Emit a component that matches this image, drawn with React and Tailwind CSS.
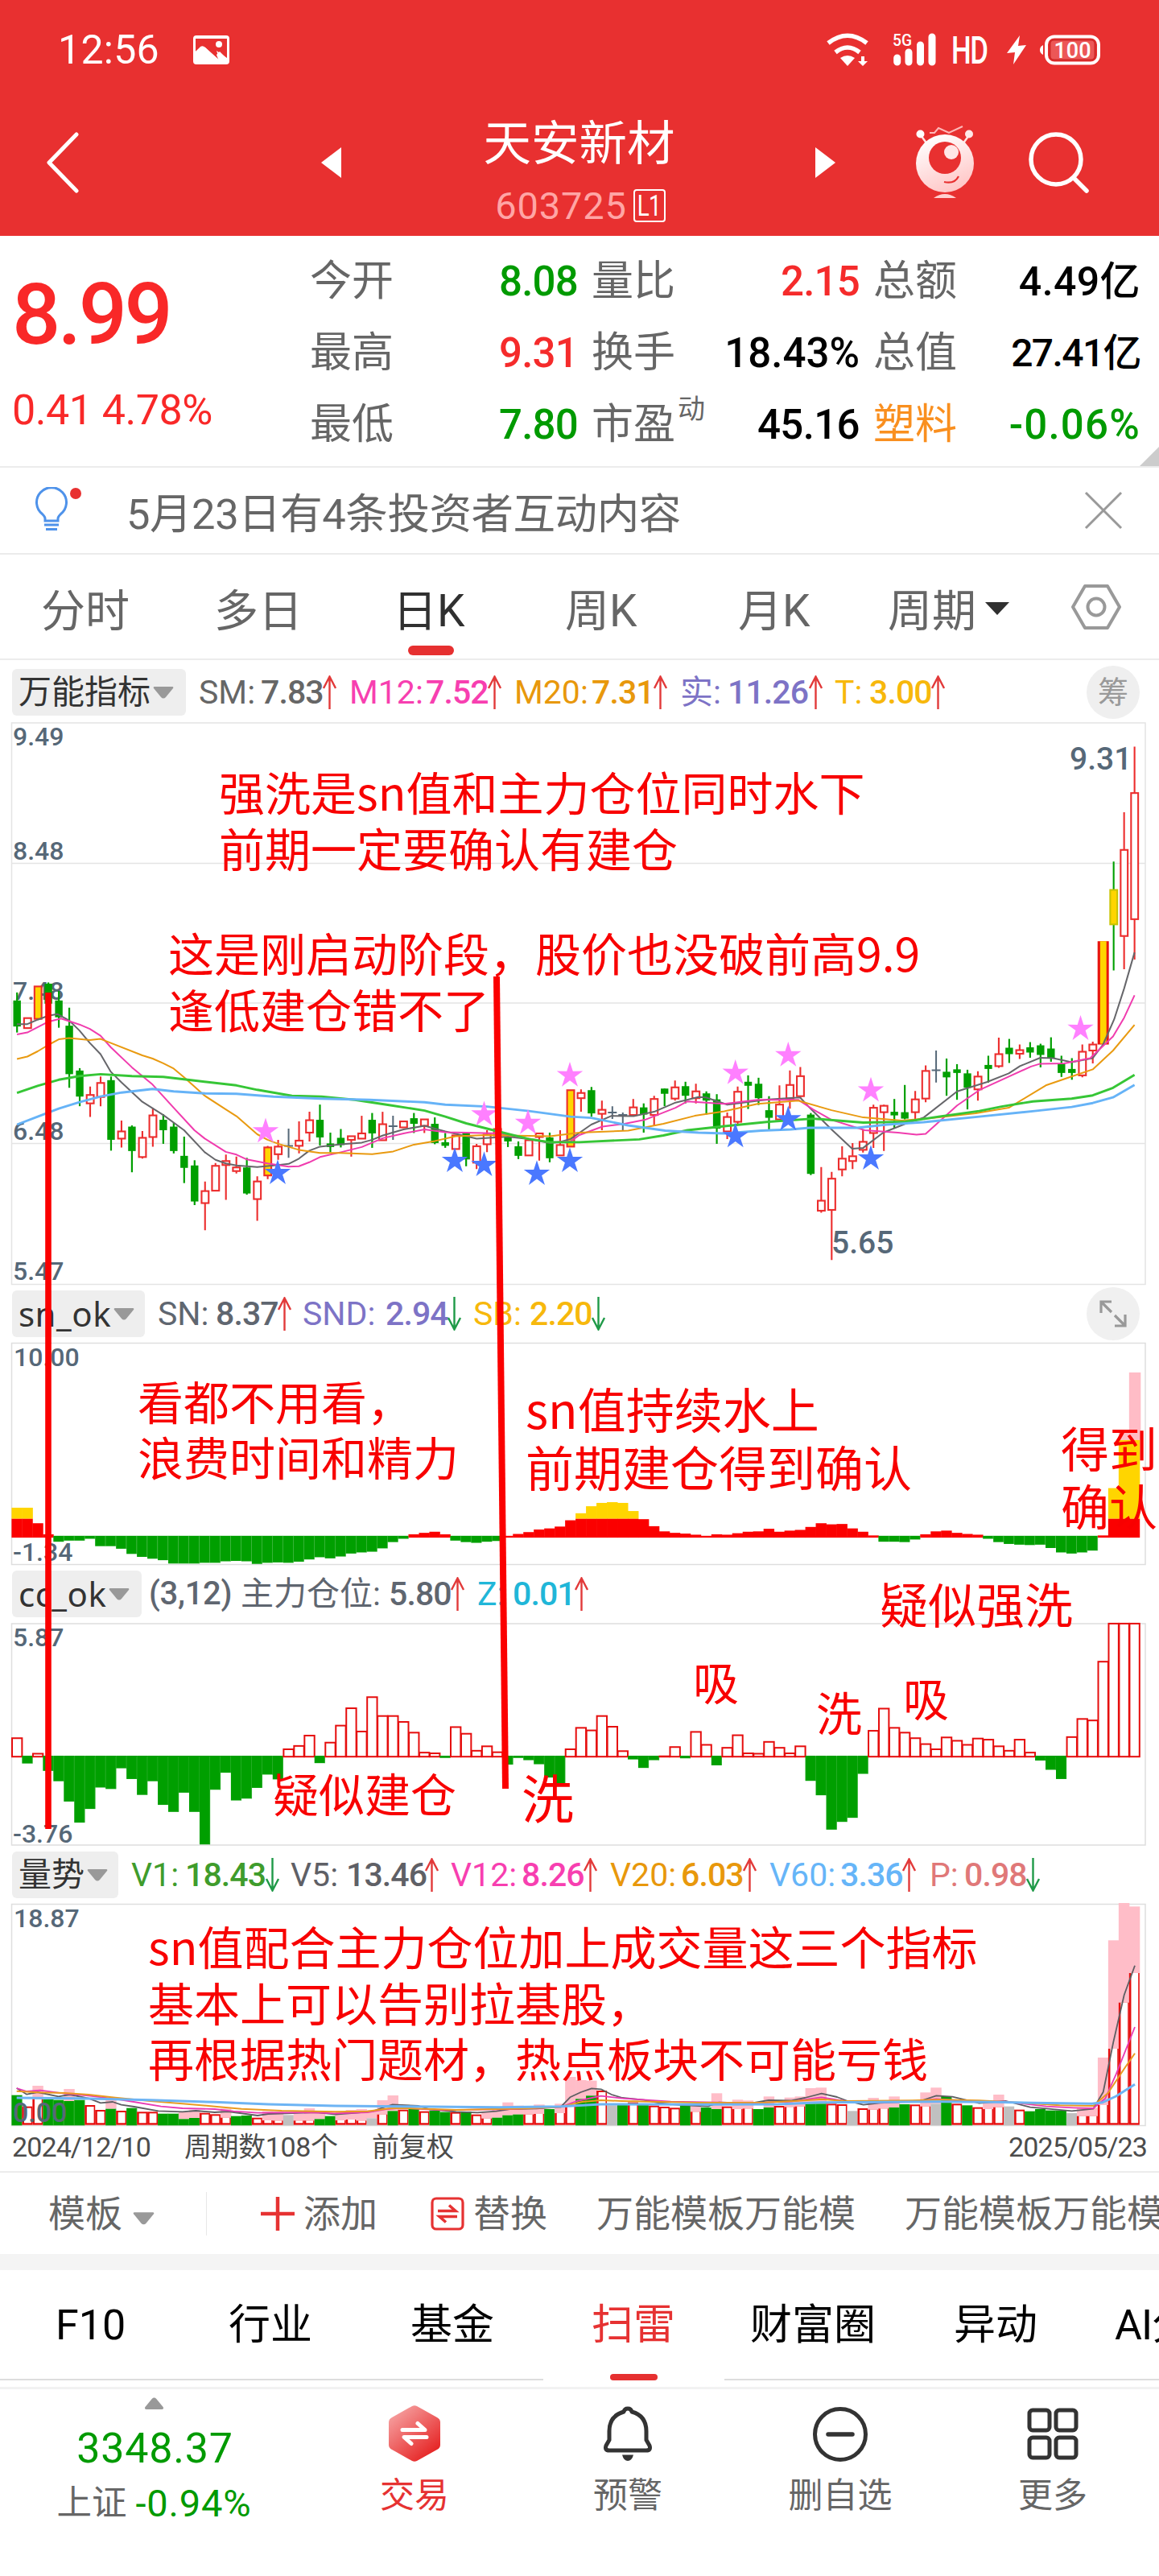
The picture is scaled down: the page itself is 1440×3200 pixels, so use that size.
import React from "react";

const CJK = "font-['Roboto','Noto_Sans_CJK_SC',sans-serif]";
const HAND = "font-['Noto_Sans_CJK_SC',sans-serif]";
const NUM_FAMILY = "Roboto, sans-serif";

const RED = "#e60d0d";
const GREEN = "#009f00";
const STEP = 12.976;
const LEFT = 14.4;
const centre = (i) => LEFT + STEP * (i + 0.5) + 0.3;

/* ---------- price panel ---------- */
// [kind, body top, body bottom, high, low] in panel ticks
const CANDLES = `g 850 915 830 930|r 893 920 893 920|y 814 897 814 897|g 808 858 805 858|g 850 892 826 918|g 913 1034 868 1068|g 1025 1090 1019 1114|r 1085 1108 1065 1141|r 1055 1092 1040 1114|g 1049 1198 1040 1225|r 1176 1196 1150 1217|g 1165 1226 1162 1279|r 1192 1242 1176 1245|r 1136 1192 1118 1215|g 1148 1174 1134 1208|g 1165 1226 1156 1232|g 1238 1268 1190 1306|g 1262 1352 1249 1361|r 1325 1357 1302 1424|r 1262 1326 1256 1326|r 1250 1262 1235 1348|r 1266 1277 1240 1282|g 1267 1332 1243 1335|r 1301 1347 1289 1400|y 1216 1288 1213 1296|r 1214 1235 1198 1248|d 1213 1213 1170 1243|r 1199 1214 1152 1232|r 1148 1181 1128 1202|g 1148 1192 1110 1212|g 1207 1216 1180 1229|g 1193 1211 1171 1217|r 1188 1199 1188 1240|r 1181 1196 1138 1196|g 1148 1182 1131 1218|r 1158 1200 1128 1200|d 1164 1164 1138 1198|r 1151 1168 1151 1168|g 1144 1158 1131 1181|r 1146 1164 1146 1181|g 1158 1206 1142 1209|g 1204 1213 1181 1218|r 1186 1222 1186 1222|g 1181 1247 1181 1264|r 1213 1256 1208 1271|r 1184 1210 1174 1229|r 1170 1188 1170 1188|g 1190 1202 1188 1216|g 1214 1238 1202 1246|r 1198 1238 1198 1238|r 1181 1192 1180 1250|g 1192 1244 1180 1254|r 1210 1238 1174 1238|y 1073 1216 1073 1216|r 1080 1095 1072 1128|g 1074 1132 1066 1140|r 1122 1134 1100 1174|d 1130 1130 1114 1146|d 1136 1136 1130 1174|r 1116 1137 1096 1137|g 1117 1135 1107 1180|r 1095 1137 1088 1162|g 1070 1083 1070 1114|r 1066 1096 1050 1100|g 1064 1088 1053 1107|r 1076 1095 1058 1107|g 1082 1100 1077 1135|g 1097 1170 1084 1208|r 1140 1178 1130 1196|r 1077 1154 1065 1160|g 1053 1063 1037 1121|g 1058 1094 1043 1111|g 1124 1143 1089 1172|r 1109 1148 1062 1148|r 1060 1096 1025 1120|r 1038 1090 1016 1094|g 1135 1283 1131 1286|r 1349 1376 1266 1380|r 1294 1374 1278 1498|r 1244 1273 1214 1289|r 1238 1252 1206 1271|r 1202 1224 1172 1230|r 1117 1182 1110 1218|r 1112 1130 1110 1226|g 1128 1137 1096 1168|g 1129 1145 1061 1147|r 1096 1130 1076 1148|r 1025 1096 1012 1104|d 1024 1024 975 1055|g 1028 1042 995 1088|g 1022 1031 1009 1098|g 1032 1068 1023 1122|r 1039 1073 1027 1100|g 1011 1021 988 1055|r 983 1015 943 1018|g 968 984 946 1006|r 973 984 960 996|g 967 980 954 993|g 962 986 958 1017|g 970 995 942 1003|g 1009 1031 988 1041|g 1021 1031 994 1048|r 977 1038 960 1042|r 959 976 953 1007|Y 702 958 702 958|G 573 661 503 775|r 473 690 380 772|r 331 648 216 748`
  .split("|")
  .map((row) => {
    const [kind, ...v] = row.split(" ");
    return [kind, ...v.map((n) => 820 + Number(n) / 2.0103)];
  });

const AVERAGES = [
  ["#66666a", 2, "46,909 74,909 102,898 131,888 155,884 187,900 215,925 243,956 272,984 300,1028 329,1055 385,1103 442,1136 498,1174 554,1229 583,1248 611,1257 640,1262 696,1266 753,1261 781,1258 809,1245 837,1225 866,1215 922,1209 979,1205 1007,1198 1036,1187 1092,1172 1149,1163 1205,1177 1262,1189 1290,1195 1340,1192 1374,1190 1431,1196 1488,1206 1516,1203 1544,1196 1600,1160 1655,1138 1715,1139 1770,1128 1828,1105 1890,1091 1910,1092 1968,1110 2080,1097 2165,1092 2190,1117 2250,1172 2306,1220 2336,1218 2390,1180 2450,1158 2500,1142 2590,1077 2670,1054 2730,1032 2760,1014 2815,993 2850,994 2900,1004 2957,994 2985,960 3015,897 3042,820 3070,730"],
  ["#f03cae", 2, "46,935 74,930 131,903 165,895 215,910 243,921 272,938 300,967 357,1017 413,1060 470,1118 526,1174 554,1195 611,1228 640,1235 668,1247 724,1257 781,1265 809,1264 837,1254 866,1241 922,1229 979,1216 1036,1194 1092,1182 1149,1172 1205,1179 1262,1180 1350,1182 1431,1195 1488,1204 1544,1202 1568,1186 1630,1165 1690,1158 1745,1148 1828,1118 1860,1102 1960,1108 2050,1098 2160,1098 2200,1122 2250,1148 2340,1174 2430,1180 2480,1185 2505,1183 2590,1112 2650,1074 2730,1040 2790,1015 2815,1008 2880,1007 2950,994 3012,940 3042,893 3070,837"],
  ["#e99a10", 2, "46,996 74,990 102,977 131,961 159,947 187,944 243,949 272,946 300,956 385,987 413,995 442,1007 470,1020 498,1042 554,1088 611,1122 640,1139 696,1184 724,1198 753,1208 809,1223 866,1231 922,1231 1007,1234 1064,1227 1120,1210 1177,1201 1233,1189 1318,1186 1431,1188 1488,1189 1568,1180 1700,1175 1795,1158 1880,1138 1960,1127 2050,1108 2160,1100 2250,1124 2336,1142 2440,1150 2520,1144 2640,1132 2730,1118 2830,1062 2900,1040 2957,1022 3012,975 3070,911"],
  ["#36c636", 2.9, "46,1081 102,1063 159,1048 215,1039 272,1034 357,1039 442,1041 526,1050 640,1062 696,1073 790,1088 870,1090 960,1098 1060,1112 1149,1125 1205,1140 1262,1157 1318,1170 1374,1183 1431,1196 1488,1204 1568,1204 1730,1197 1795,1187 1860,1174 1960,1164 2080,1153 2200,1145 2336,1155 2450,1153 2540,1140 2650,1126 2710,1115 2795,1102 2900,1095 2957,1087 3012,1068 3070,1036"],
  ["#66b3f7", 2.9, "46,1160 102,1140 159,1120 215,1104 272,1090 329,1080 413,1071 470,1077 554,1082 640,1083 740,1090 866,1095 1000,1098 1149,1104 1205,1110 1318,1115 1431,1126 1544,1140 1600,1143 1700,1162 1800,1175 1890,1180 1960,1182 2060,1175 2140,1172 2190,1168 2320,1168 2400,1160 2500,1154 2650,1140 2800,1126 2900,1116 2957,1106 3012,1092 3070,1061"],
];

const mapPoints = (text, fx, fy) =>
  text
    .split(" ")
    .map((p) => {
      const [x, y] = p.split(",").map(Number);
      return `${fx(x).toFixed(1)},${fy(y).toFixed(1)}`;
    })
    .join(" ");

const BUY_STARS = [[330, 1405], [601.5, 1384], [656, 1394.5], [708, 1335.4], [913.7, 1332.4], [979.3, 1310.5], [1082, 1354.3], [1342.5, 1277.6]];
const LOW_STARS = [[345, 1456.7], [565, 1441.8], [601.5, 1446.8], [667, 1457.7], [708, 1441.8], [913.7, 1411], [979.3, 1390], [1082, 1438.8]];

const starPath = (cx, cy) => {
  const pts = [];
  for (let k = 0; k < 10; k++) {
    const r = k % 2 ? 6.4 : 17;
    const a = -Math.PI / 2 + (k * Math.PI) / 5;
    pts.push(`${(cx + r * Math.cos(a)).toFixed(1)},${(cy + 0.5 + r * Math.sin(a)).toFixed(1)}`);
  }
  return pts.join(" ");
};

const Label = ({ x, y, size = 32, children }) => (
  <text x={x} y={y + size * 0.356} fontSize={size} fontFamily={NUM_FAMILY} fontWeight="500" fill="#566878">
    {children}
  </text>
);

function Candle({ row, i }) {
  const [kind, top, bottom, high, low] = row;
  const x = centre(i);
  if (kind === "d") {
    return <path d={`M${x} ${high}V${low}M${x - 5.5} ${top}H${x + 5.5}`} stroke="#566878" strokeWidth="2" />;
  }
  if (kind === "g") {
    return (
      <g fill={GREEN}>
        <rect x={x - 1.1} y={high} width="2.2" height={low - high} />
        <rect x={x - 4.7} y={top} width="9.4" height={bottom - top} />
      </g>
    );
  }
  if (kind === "Y") {
    return (
      <g>
        <rect x={x - 7} y={top} width="14" height={bottom - top + 1} fill="#e8150f" />
        <rect x={x - 3.8} y={top} width="7.8" height={bottom - top} fill="#ffd500" />
      </g>
    );
  }
  const stroke = kind === "G" ? GREEN : "#ec2d2d";
  return (
    <g stroke={stroke} strokeWidth="2.1">
      <path d={`M${x} ${high}V${top}M${x} ${bottom}V${low}`} />
      <rect
        x={x - 4.3}
        y={top + 0.5}
        width="8.8"
        height={Math.max(2, bottom - top - 1)}
        fill={kind === "r" ? "#fff" : "#ffd500"}
        stroke={kind === "G" ? "#c9c400" : stroke}
      />
    </g>
  );
}

function PricePanel() {
  return (
    <svg className="block h-[699px] w-full overflow-visible" viewBox="0 897 1440 699">
      <path d="M14.5 898H1423V1595.5H14.5ZM14.5 1072.5H1423M14.5 1246H1423M14.5 1420.5H1423" fill="none" stroke="#e4e4e4" strokeWidth="1.5" />
      <Label x={16} y={915}>9.49</Label>
      <Label x={16} y={1056.5}>8.48</Label>
      <Label x={16} y={1231}>7.48</Label>
      <Label x={16} y={1405}>6.48</Label>
      <Label x={16} y={1578.5}>5.47</Label>
      {CANDLES.map((row, i) => (
        <Candle key={i} row={row} i={i} />
      ))}
      {AVERAGES.map(([color, w, pts]) => (
        <polyline key={color} points={mapPoints(pts, (x) => x / 2.178, (y) => 820 + y / 2.0103)} fill="none" stroke={color} strokeWidth={w} strokeLinejoin="round" />
      ))}
      {BUY_STARS.map(([x, y]) => (
        <polygon key={x} points={starPath(x, y)} fill="#ff80ff" />
      ))}
      {LOW_STARS.map(([x, y]) => (
        <polygon key={x} points={starPath(x, y)} fill="#4a78ff" />
      ))}
      <Label x={1329} y={942.5} size={39}>9.31</Label>
      <Label x={1033} y={1543} size={39}>5.65</Label>
    </svg>
  );
}

/* ---------- sn_ok panel ---------- */
const SN = "668 668 680 710 730 727 727 722 742 742 749 763 771 776 780 789 789 789 787 787 783 782 783 790 787 786 787 784 778 772 775 770 762 759 757 748 731 722 710 706 703 710 727 731 733 730 728 714 709 704 697 694 689 672 668 668 668 668 668 668 669 688 702 706 708 711 714 710 711 707 703 702 695 703 700 698 690 680 683 682 694 703 713 730 730 731 724 710 702 700 706 709 711 722 731 736 738 739 738 747 759 762 759 754 713 668 668 668"
  .split(" ")
  .map(Number);
const SN_GOLD = { 0: 638, 1: 638, 54: 653, 55: 634, 56: 625, 57: 623, 58: 625, 59: 647, 105: 585, 106: 455, 107: 455 };
const SN_PINK = { 106: 430, 107: 272 };
const panelY = (v) => 1580 + v / 2.178;

function SnPanel() {
  const x = (i) => LEFT + STEP * i;
  return (
    <svg className="block h-[276px] w-full overflow-visible" viewBox="0 1668 1440 276">
      <path d="M14.5 1668.5H1423V1943.5H14.5Z" fill="none" stroke="#dedede" strokeWidth="1.5" />
      {SN.map((v, i) => {
        const up = v < 717;
        const y0 = up ? panelY(v) : panelY(714);
        const y1 = up ? panelY(719) : panelY(v);
        return (
          <g key={i}>
            {SN_PINK[i] && <rect x={x(i)} y={panelY(SN_PINK[i])} width={STEP + 1.5} height={panelY(455) - panelY(SN_PINK[i])} fill="#ffbcc6" />}
            {SN_GOLD[i] && <rect x={x(i)} y={panelY(SN_GOLD[i])} width={STEP + 0.5} height={panelY(668) - panelY(SN_GOLD[i])} fill="#ffd500" />}
            <rect x={x(i)} y={y0} width={up ? STEP + 0.4 : STEP - 0.3} height={y1 - y0} fill={up ? "#fb0000" : GREEN} />
            {!up && <rect x={x(i) + STEP - 0.5} y={y0} width="0.7" height={y1 - y0} fill="#2eb02e" />}
          </g>
        );
      })}
      <Label x={17} y={1686}>10.00</Label>
      <Label x={16} y={1928}>-1.34</Label>
    </svg>
  );
}

/* ---------- cc_ok panel ---------- */
const CC = "1262 1330 1304 1350 1378 1433 1490 1453 1395 1399 1343 1372 1415 1378 1442 1461 1409 1461 1549 1401 1355 1430 1425 1396 1360 1373 1292 1283 1255 1329 1274 1228 1181 1244 1151 1202 1202 1218 1247 1301 1303 1315 1232 1250 1296 1284 1300 1333 1315 1321 1332 1368 1385 1292 1234 1241 1202 1231 1297 1319 1342 1321 1311 1286 1316 1245 1280 1335 1288 1254 1303 1304 1272 1288 1303 1284 1377 1416 1509 1488 1477 1358 1242 1182 1234 1247 1262 1278 1292 1260 1269 1280 1263 1266 1284 1296 1266 1301 1322 1347 1372 1259 1210 1214 1055 952 952 952"
  .split(" ")
  .map(Number);

function CcPanel() {
  const x = (i) => LEFT + STEP * i;
  return (
    <svg className="block h-[277px] w-full overflow-visible" viewBox="0 2016 1440 277">
      <path d="M14.5 2017H1423V2292H14.5Z" fill="none" stroke="#dedede" strokeWidth="1.5" />
      {CC.map((v, i) =>
        v < 1313 ? (
          <rect key={i} x={x(i) + 0.6} y={panelY(v) - 0.2} width={STEP - 0.6} height={Math.max(0.5, panelY(1312) - panelY(v))} fill="#fff" stroke={RED} strokeWidth="2" />
        ) : (
          <g key={i}>
            <rect x={x(i)} y={panelY(1309)} width={STEP} height={panelY(v) - panelY(1309)} fill={GREEN} />
            <rect x={x(i) + STEP - 0.5} y={panelY(1311)} width="0.7" height={panelY(v) - panelY(1311)} fill="#2eb02e" />
          </g>
        )
      )}
      <Label x={16} y={2034}>5.87</Label>
      <Label x={16} y={2278}>-3.76</Label>
    </svg>
  );
}

/* ---------- volume panel ---------- */
// kind, body top, optional highlight top
const VOLUME = "g248 r290 r262:213 g264 g266 g270:225 g266 r285 r303 g299:264 r306 g296 r310 r310 g317 g317 g337:312 g333:304 r314 r319 r332:298 g326 g324 r332 r342:308 r343:310 x322 r343:318 r343:297 g337:312 g326 r342:312 r339:303 r343:300 x334:304 r320:267 g307:249 r302 g300 r308 g305 g311 r311 g309 r320 r335:310 g332:300 g323:275 g320:287 r320:290 r318:283 g300 r315:280 r290:180 g262:192 g250:194 r231 x286 g285 r275 g282 r287 r291 r295 g287 r310:280 g294 g300:241 r290 r300:265 r298:268 g300 g294:253 r288 r292:257 r290:253 g280:222 g280:220 r280 r282 x307 r297 r302:258 r298:270 g294:253 g282 r283 r290:238 x280:220 g252 r280 g286 r293 r300:275 r293:246 x290 r302 g308 g300 g305 g305 x315 r326:295 r326:295 r285:108 r75:-329 r-97:-468 r-207:-455"
  .split(" ")
  .map((s) => {
    const [body, halo] = s.slice(1).split(":");
    return [s[0], Number(body), halo === undefined ? null : Number(halo)];
  });

const VOLUME_LINES = [
  ["#5d5d62", 1.8, "62,222 100,245 140,237 218,253 260,246 330,260 375,277 420,273 452,284 500,291 590,307 680,310 730,306 800,312 850,309 960,324 1000,318 1180,312 1250,320 1330,314 1390,308 1420,297 1463,283 1560,288 1600,300 1700,310 1780,313 1850,308 1900,300 2000,298 2090,292 2125,256 2165,237 2205,223 2240,226 2280,246 2320,258 2400,266 2460,278 2540,285 2640,290 2680,275 2800,278 2865,267 2950,268 3000,258 3062,242 3120,255 3160,270 3218,284 3280,277 3430,270 3490,250 3550,254 3600,266 3650,278 3750,270 3840,293 3900,298 3995,307 4075,299 4112,236 4150,50 4190,-125 4230,-235"],
  ["#e83ab4", 1.8, "62,222 100,234 150,230 240,242 330,250 430,262 480,270 600,290 680,297 800,300 870,308 960,314 1150,312 1250,316 1370,312 1440,300 1500,296 1650,304 1900,300 2090,292 2150,270 2240,251 2320,260 2500,272 2800,277 2950,272 3062,256 3150,270 3250,275 3400,273 3490,262 3600,270 3750,272 3900,290 4000,295 4075,297 4120,260 4160,170 4230,-6"],
  ["#e99a20", 2, "62,233 140,238 240,240 330,246 430,257 560,270 680,280 800,290 900,299 1050,306 1250,310 1370,308 1450,298 1500,296 1700,303 1950,298 2090,292 2170,273 2240,267 2320,270 2600,276 2850,275 2960,270 3062,263 3150,270 3400,268 3500,265 3650,268 3800,276 3950,286 4075,288 4130,240 4190,150 4230,92"],
  ["#6db4f4", 3, "62,258 300,260 560,266 800,274 1000,282 1250,288 1500,290 1860,293 2090,290 2240,282 2600,283 2900,282 3060,275 3500,272 3700,274 3850,277 4070,280 4110,275 4160,252 4230,208"],
];

function VolumePanel() {
  const x = (i) => LEFT + STEP * i;
  const y = (v) => 2520 + v / 3;
  const base = y(359);
  return (
    <svg className="block h-[276px] w-full overflow-visible" viewBox="0 2365 1440 276">
      <path d="M14.5 2365.5H1423V2640.5H14.5Z" fill="none" stroke="#dedede" strokeWidth="1.5" />
      {VOLUME.map(([kind, body, halo], i) => (
        <g key={i}>
          {halo !== null && <rect x={x(i)} y={y(halo)} width={STEP + 0.5} height={y(body) - y(halo)} fill="#ffbdc8" />}
          {kind === "r" && (
            <g>
              <rect x={x(i)} y={y(body)} width={STEP} height={base - y(body)} fill={RED} />
              <rect x={x(i) + 2.6} y={y(body) + (halo === null ? 2 : 0)} width={STEP - 4.2} height={Math.max(1, base - y(body) - (halo === null ? 4.4 : 2.4))} fill="#fff" />
            </g>
          )}
          {kind !== "r" && <rect x={x(i)} y={y(body)} width={STEP + 0.1} height={base - y(body) + 0.6} fill={kind === "g" ? GREEN : "#c0c0c0"} />}
          {kind === "g" && <rect x={x(i) + STEP - 0.6} y={y(body)} width="0.6" height={base - y(body)} fill="#3bb33b" />}
        </g>
      ))}
      {VOLUME_LINES.map(([color, w, pts]) => (
        <polyline key={color} points={mapPoints(pts, (v) => v / 3, y)} fill="none" stroke={color} strokeWidth={w} strokeLinejoin="round" />
      ))}
      <Label x={17} y={2383}>18.87</Label>
      <Label x={16} y={2624} size={34}>0.00</Label>
    </svg>
  );
}

/* ---------- indicator rows ---------- */
const Arrow = ({ down }) => (
  <svg className="h-[42px] w-[17px] shrink-0" viewBox="0 0 17 42">
    <path
      d={down ? "M8.5 0V40M1 26L8.5 40.5L16 26" : "M8.5 42V2M1 16L8.5 1.5L16 16"}
      fill="none"
      stroke={down ? "#1f9a48" : "#e23a3a"}
      strokeWidth="2.4"
    />
  </svg>
);

function Metric({ box, labelBox, color, label, value, valueBox = "w-[77px]", down }) {
  return (
    <div className={`flex shrink-0 items-center ${box} ${color}`}>
      <span className={`shrink-0 text-[41px] leading-none ${labelBox}`}>{label}</span>
      <span className={`shrink-0 text-[41px] font-medium leading-none tracking-[-0.9px] ${valueBox}`}>{value}</span>
      <Arrow down={down} />
    </div>
  );
}

const Caret = ({ className }) => (
  <svg className={className} viewBox="0 0 26 16">
    <path d="M2 1H24Q26 1 25 3L16 14Q13 17 10 14L1 3Q0 1 2 1Z" fill="#999" />
  </svg>
);

const Pill = ({ box, text, children }) => (
  <div className={`flex h-[58px] shrink-0 items-center rounded-[6px] bg-[#eee] pl-[8px] text-[#333] ${box}`}>
    <span className={`whitespace-nowrap leading-none ${text}`}>{children}</span>
    <Caret className="ml-[3px] h-[16px] w-[26px] shrink-0" />
  </div>
);

const NOTES = [
  ["left-[272px] top-[127px] text-[57px] leading-[70px]", ["强洗是sn值和主力仓位同时水下", "前期一定要确认有建仓"]],
  ["left-[209px] top-[327px] text-[57px] leading-[70px]", ["这是刚启动阶段，股价也没破前高9.9", "逢低建仓错不了"]],
  ["left-[171px] top-[885px] text-[57px] leading-[69px]", ["看都不用看，", "浪费时间和精力"]],
  ["left-[653px] top-[893px] text-[60px] leading-[72px]", ["sn值持续水上", "前期建仓得到确认"]],
  ["left-[1318px] top-[941px] text-[60px] leading-[72px]", ["得到", "确认"]],
  ["left-[1093px] top-[1135px] text-[60px] leading-[72px]", ["疑似强洗"]],
  ["left-[861px] top-[1232px] text-[57px] leading-[70px]", ["吸"]],
  ["left-[1014px] top-[1270px] text-[57px] leading-[70px]", ["洗"]],
  ["left-[1122px] top-[1252px] text-[57px] leading-[70px]", ["吸"]],
  ["left-[339px] top-[1371px] text-[57px] leading-[70px]", ["疑似建仓"]],
  ["left-[648px] top-[1375px] text-[65px] leading-[72px]", ["洗"]],
  ["left-[184px] top-[1562px] text-[57px] leading-[69.5px]", ["sn值配合主力仓位加上成交量这三个指标", "基本上可以告别拉基股，", "再根据热门题材，热点板块不可能亏钱"]],
];

function Charts() {
  return (
    <section className="relative overflow-hidden">
      <div className="flex h-[77px] items-center pl-[15px] pt-[3px]">
        <Pill box="w-[216px]" text="text-[41px]">万能指标</Pill>
        <div className="ml-[16px] flex items-center">
          <Metric box="w-[187px]" labelBox="w-[77px]" color="text-[#666]" label="SM:" value="7.83" />
          <Metric box="w-[205px]" labelBox="w-[95px]" color="text-[#f73fb0]" label="M12:" value="7.52" />
          <Metric box="w-[206px]" labelBox="w-[96px]" color="text-[#e8980c]" label="M20:" value="7.31" />
          <Metric box="w-[192px]" labelBox="w-[59px]" color="text-[#7d73c6]" label="实:" value="11.26" valueBox="w-[101px]" />
          <Metric box="w-[160px]" labelBox="w-[43px]" color="text-[#f7b80c]" label="T:" value="3.00" />
        </div>
        <div className="ml-[153px] flex size-[66px] shrink-0 items-center justify-center rounded-full bg-[#efefef] text-[38px] leading-none text-[#999]">筹</div>
      </div>
      <PricePanel />

      <div className="flex h-[72px] items-center pl-[15px]">
        <Pill box="w-[165px]" text="font-['Noto_Sans',sans-serif] text-[42px] tracking-[0.5px]">sn_ok</Pill>
        <div className="ml-[16px] flex items-center">
          <Metric box="w-[180px]" labelBox="w-[72px]" color="text-[#5f6670]" label="SN:" value="8.37" />
          <Metric box="w-[212px]" labelBox="w-[103px]" color="text-[#7d73c6]" label="SND:" value="2.94" down />
          <Metric box="w-[180px]" labelBox="w-[70px]" color="text-[#f7b80c]" label="SB:" value="2.20" down />
        </div>
        <div className="ml-[582px] flex size-[66px] shrink-0 items-center justify-center rounded-full bg-[#f0f0f0]">
          <svg className="size-[34px]" viewBox="0 0 34 34" fill="none" stroke="#999" strokeWidth="3.2">
            <path d="M2 16V2H15M3 3L15 15M32 18V32H19M31 31L19 19" />
          </svg>
        </div>
      </div>
      <SnPanel />

      <div className="flex h-[72px] items-center pl-[15px]">
        <Pill box="w-[161px]" text="font-['Noto_Sans',sans-serif] text-[42px] tracking-[0.5px]">cc_ok</Pill>
        <span className="ml-[9px] w-[114px] shrink-0 text-[40px] font-medium leading-none tracking-[-0.3px] text-[#5f6670]">(3,12)</span>
        <Metric box="w-[294px]" labelBox="w-[184px]" color="text-[#5f6670]" label="主力仓位:" value="5.80" />
        <Metric box="w-[160px]" labelBox="w-[44px]" color="text-[#20b6d8]" label="Z:" value="0.01" />
      </div>
      <CcPanel />

      <div className="flex h-[72px] items-center pl-[15px]">
        <Pill box="w-[132px]" text="text-[41px]">量势</Pill>
        <div className="ml-[16px] flex items-center">
          <Metric box="w-[198px]" labelBox="w-[67px]" color="text-[#3f9c2c]" label="V1:" value="18.43" valueBox="w-[100px]" down />
          <Metric box="w-[199px]" labelBox="w-[69px]" color="text-[#5f6066]" label="V5:" value="13.46" valueBox="w-[98px]" />
          <Metric box="w-[198px]" labelBox="w-[88px]" color="text-[#f73fb0]" label="V12:" value="8.26" />
          <Metric box="w-[198px]" labelBox="w-[88px]" color="text-[#e8980c]" label="V20:" value="6.03" />
          <Metric box="w-[199px]" labelBox="w-[88px]" color="text-[#66b5f8]" label="V60:" value="3.36" />
          <Metric box="w-[150px]" labelBox="w-[43px]" color="text-[#e07878]" label="P:" value="0.98" down />
        </div>
      </div>
      <VolumePanel />

      <div className="flex h-[56px] items-center px-[15px] pb-[4px] text-[34px] leading-none text-[#4c4c4c]">
        <span className="w-[214px] tracking-[-0.9px]">2024/12/10</span>
        <span className="w-[233px] tracking-[-0.4px]">周期数108个</span>
        <span>前复权</span>
        <span className="ml-auto tracking-[-0.9px]">2025/05/23</span>
      </div>

      <svg className="absolute left-0 top-0 h-[1480px] w-full" viewBox="0 820 1440 1480" fill="none" stroke="#fb0000">
        <path d="M60 1233V2272" strokeWidth="7.6" />
        <path d="M617 1213L628 2222" strokeWidth="8" />
      </svg>
      {NOTES.map(([place, lines]) => (
        <div key={place} className={`absolute whitespace-nowrap text-[#f80000] ${HAND} ${place}`}>
          {lines.map((t) => (
            <p key={t}>{t}</p>
          ))}
        </div>
      ))}
    </section>
  );
}

/* ---------- header ---------- */
function Header() {
  return (
    <header className="h-[293px] bg-[#e83030] text-white">
      <div className="flex h-[124px] items-center pl-[72px] pr-[73px]">
        <span className="w-[168px] text-[50px] leading-none tracking-[0.3px]">12:56</span>
        <svg className="h-[36px] w-[45px]" viewBox="0 0 45 36">
          <rect width="45" height="36" rx="4" fill="#fff" />
          <path d="M3 4H42V28L29 19L33 31L15 15Q12 13 9 15L3 20Z" fill="#e83030" />
          <path d="M3 20L9 14Q12 12 15 15L32 31H3ZM29 24L33 20L42 29V32H32Z" fill="#fff" />
          <circle cx="32" cy="11" r="4" fill="#fff" />
        </svg>
        <svg className="ml-auto h-[42px] w-[52px]" viewBox="0 0 52 42" fill="none" stroke="#fff" strokeWidth="5.5">
          <path d="M2 12.5Q26 -6 50 12.5M11 24Q26 12 41 24" />
          <path d="M17 31Q26 25 35 31L26 41Z" fill="#fff" stroke="none" />
          <path d="M43 29H47V35H51L45 41L39 35H43Z" fill="#fff" stroke="none" />
        </svg>
        <svg className="ml-[31px] h-[42px] w-[53px] overflow-visible" viewBox="0 0 53 42" stroke="#fff" strokeWidth="9" strokeLinecap="round">
          <path d="M4.7 31V36M19 24V36M33.5 15V36M48 5V36" />
          <text x="-1" y="15.5" fontSize="20" fontWeight="500" fontFamily={NUM_FAMILY} fill="#fff" stroke="none" textLength="24" lengthAdjust="spacingAndGlyphs">5G</text>
        </svg>
        <span className="ml-[19px] w-[48px] text-[49px] font-medium leading-none tracking-[-2px]"><span className="inline-block origin-left scale-x-[0.71]">HD</span></span>
        <svg className="ml-[20px] h-[38px] w-[25px]" viewBox="0 0 25 38" fill="#fff">
          <path d="M17 1L1 23L11 22L9 37L25 13L15 14Z" />
        </svg>
        <svg className="ml-[17px] h-[40px] w-[75px]" viewBox="0 0 75 40">
          <path d="M4 14Q0 16 0 20Q0 24 4 26Z" fill="#fff" />
          <rect x="8" y="3.5" width="65" height="33" rx="10" fill="none" stroke="#fff" strokeWidth="4" />
          <rect x="12.5" y="7.5" width="56" height="25" rx="5" fill="#ec5757" stroke="#d02828" strokeWidth="2" />
          <text x="40.5" y="30" textAnchor="middle" fontSize="27" fontWeight="500" fontFamily={NUM_FAMILY} fill="#fff">100</text>
        </svg>
      </div>
      <div className="flex h-[169px] items-start">
        <svg className="ml-[57px] mt-[40px] h-[76px] w-[42px]" viewBox="0 0 42 76" fill="none" stroke="#fff" strokeWidth="5" strokeLinecap="round" strokeLinejoin="round">
          <path d="M38 3L4 38L38 73" />
        </svg>
        <svg className="ml-[300px] mt-[59px] h-[38px] w-[25px]" viewBox="0 0 25 38" fill="#fff">
          <path d="M25 0V38L0 19Z" />
        </svg>
        <div className="mt-[23px] flex w-[589px] flex-col items-center">
          <h1 className="pl-[2px] text-[59.5px] leading-[64px]">天安新材</h1>
          <div className="mt-[21px] flex items-center pl-[5px] leading-none">
            <span className="text-[47px] tracking-[0.8px] text-[#ffa5a5]">603725</span>
            <span className="ml-[8px] flex h-[41px] w-[40px] items-center justify-center rounded-[4px] border-2 border-white text-[37px] tracking-[-1px]"><span className="scale-x-[0.75]">L1</span></span>
          </div>
        </div>
        <svg className="mt-[59px] h-[38px] w-[25px]" viewBox="0 0 25 38" fill="#fff">
          <path d="M0 0V38L25 19Z" />
        </svg>
        <svg className="ml-[99px] mt-[32px] h-[92px] w-[74px]" viewBox="0 0 74 92">
          <defs>
            <linearGradient id="mascot" x1="0.3" y1="0" x2="0.7" y2="1">
              <stop offset="0" stopColor="#fff" />
              <stop offset="1" stopColor="#ffc4c4" />
            </linearGradient>
          </defs>
          <path d="M7 12L15 23M67 12L59 23" stroke="#ffe3e3" strokeWidth="2.5" />
          <circle cx="6.500" cy="10.500" r="5" fill="#fff" />
          <circle cx="67" cy="10.500" r="5" fill="#ffe8e8" />
          <path d="M18 9H24L29 3L42 9L59 1" fill="none" stroke="#ffb8b8" strokeWidth="2" />
          <circle cx="37" cy="47" r="36" fill="url(#mascot)" />
          <circle cx="37" cy="40" r="20" fill="#e83030" />
          <circle cx="45" cy="33" r="9" fill="#ffe6e6" />
          <path d="M36 70Q49 73 54 63" fill="none" stroke="#e83030" strokeWidth="2.2" />
          <path d="M23 90Q37 80 51 90Z" fill="#ffd0d0" />
        </svg>
        <svg className="ml-[66px] mt-[39px] h-[78px] w-[78px]" viewBox="0 0 78 78" fill="none" stroke="#fff" strokeWidth="5.500" strokeLinecap="round">
          <circle cx="35" cy="35" r="31" />
          <path d="M57 58L73 74" />
        </svg>
      </div>
    </header>
  );
}

/* ---------- quote ---------- */
const QUOTES = [
  ["今开", "8.08", "text-[#009a00]", "量比", "2.15", "text-[#f52b2b] tracking-[-0.8px]", "总额", "4.49亿", "text-black text-[50px] tracking-[0.4px]"],
  ["最高", "9.31", "text-[#f52b2b]", "换手", "18.43%", "text-black tracking-[0px]", "总值", "27.41亿", "text-black text-[48px] tracking-[-1.6px]"],
  ["最低", "7.80", "text-[#009a00]", "市盈", "45.16", "text-black tracking-[-0.6px]", "塑料", "-0.06%", "text-[#009a00] text-[51px] tracking-[1.2px]"],
];

function Quote() {
  const num = "text-right font-medium leading-none whitespace-nowrap";
  return (
    <section className="relative flex h-[288px] border-b-2 border-[#ececec]">
      <div className="w-[385px] shrink-0 pl-[15px] text-[#f92828]">
        <div className="mt-[49px] text-[106px] font-medium leading-[98px] tracking-[-3.5px]">8.99</div>
        <div className="mt-[45px] text-[52px] leading-[50px] tracking-[-0.5px]">0.41 4.78%</div>
      </div>
      <div className="flex flex-1 flex-col pt-[12px]">
        {QUOTES.map(([a, av, ac, b, bv, bc, c, cv, cc]) => (
          <div key={a} className="flex h-[89px] items-center text-[52px] leading-none text-[#666]">
            <span className="w-[130px]">{a}</span>
            <span className={`w-[203px] text-[51px] tracking-[-0.8px] ${num} ${ac}`}>{av}</span>
            <span className="ml-[17px] flex w-[151px] shrink-0">
              {b}
              {b === "市盈" && <span className="-mt-[11px] ml-[3px] text-[34px] leading-none">动</span>}
            </span>
            <span className={`w-[182px] text-[51px] ${num} ${bc}`}>{bv}</span>
            <span className={c === "塑料" ? "ml-[17px] w-[121px] text-[#f98f1f]" : "ml-[17px] w-[121px]"}>{c}</span>
            <span className={`w-[211px] ${num} ${cc}`}>{cv}</span>
          </div>
        ))}
      </div>
      <svg className="absolute bottom-0 right-0 h-[24px] w-[24px]" viewBox="0 0 24 24"><path d="M24 0V24H0Z" fill="#ccc" /></svg>
    </section>
  );
}

function Notice() {
  return (
    <section className="flex h-[108px] items-center border-b-2 border-[#ebebeb] pb-[1px]">
      <svg className="ml-[43px] h-[58px] w-[60px]" viewBox="0 0 60 58" fill="none" stroke="#4e92ea" strokeWidth="3">
        <path d="M13 42V39Q13 37 10 34A18.500 18.500 0 1 1 32 34Q29 37 29 39V42Z" />
        <path d="M12 47H30M14 52.500H28" />
        <circle cx="51" cy="8" r="7" fill="#e83030" stroke="none" />
      </svg>
      <span className="ml-[54px] mt-[12px] text-[52.500px] leading-none tracking-[-0.45px] text-[#666]">5月23日有4条投资者互动内容</span>
      <svg className="ml-auto mr-[45px] size-[48px]" viewBox="0 0 48 48" stroke="#999" strokeWidth="3"><path d="M2 2L46 46M46 2L2 46" /></svg>
    </section>
  );
}

function PeriodTabs() {
  return (
    <nav className="flex h-[131px] items-center border-b-2 border-[#ececec] pl-[51px] pt-[11px] text-[55px] leading-none text-[#666]">
      <span className="w-[215px] shrink-0">分时</span>
      <span className="w-[222px] shrink-0">多日</span>
      <span className="relative w-[214px] shrink-0 text-[#303030]">
        日K
        <i className="absolute left-[19px] top-[70px] h-[12px] w-[57px] rounded-full bg-[#e63030]" />
      </span>
      <span className="w-[215px] shrink-0">周K</span>
      <span className="w-[186px] shrink-0">月K</span>
      <span className="shrink-0">周期</span>
      <svg className="mb-[6px] ml-[11px] h-[16px] w-[30px] shrink-0" viewBox="0 0 30 16"><path d="M0 0H30L15 16Z" fill="#303030" /></svg>
      <svg className="mb-[11px] ml-[76px] h-[58px] w-[64px] shrink-0" viewBox="0 0 64 58" fill="none" stroke="#999" strokeWidth="4" strokeLinejoin="round">
        <path d="M18 3H46L61 29L46 55H18L3 29Z" />
        <circle cx="32" cy="29" r="10.500" />
      </svg>
    </nav>
  );
}

/* ---------- lower bars ---------- */
function TemplateBar() {
  return (
    <div className="flex h-[103px] items-center overflow-hidden whitespace-nowrap border-t-2 border-[#ececec] text-[46px] leading-none text-[#666]">
      <span className="ml-[60px]">模板</span>
      <Caret className="ml-[13px] mt-[12px] h-[17px] w-[27px] shrink-0" />
      <span className="ml-[64px] h-[54px] w-px shrink-0 bg-[#e8e8e8]" />
      <svg className="ml-[67px] size-[42px] shrink-0" viewBox="0 0 42 42" stroke="#e63232" strokeWidth="4.500"><path d="M21 0V42M0 21H42" /></svg>
      <span className="ml-[11px]">添加</span>
      <svg className="ml-[66px] size-[42px] shrink-0" viewBox="0 0 42 42" fill="none" stroke="#e63232" strokeWidth="3.200">
        <rect x="2" y="2" width="38" height="38" rx="5" />
        <path d="M9 17.500H31L23 10.500M33 24.500H11L19 31.500" strokeWidth="3.500" />
      </svg>
      <span className="ml-[11px]">替换</span>
      <span className="ml-[61px]">万能模板万能模</span>
      <span className="ml-[61px]">万能模板万能模</span>
    </div>
  );
}

function SectionTabs() {
  return (
    <nav className="relative flex h-[137px] items-center overflow-hidden whitespace-nowrap pl-[67px] pt-[1px] text-[52px] leading-none text-black">
      <span className="w-[217px] shrink-0 pl-[2px]">F10</span>
      <span className="w-[226px] shrink-0">行业</span>
      <span className="w-[225px] shrink-0">基金</span>
      <span className="w-[197px] shrink-0 text-[#e63232]">扫雷</span>
      <span className="w-[253px] shrink-0">财富圈</span>
      <span className="w-[200px] shrink-0">异动</span>
      <span className="shrink-0 tracking-[-1px]">AI分</span>
      <i className="absolute bottom-0 left-0 h-[2px] w-[675px] bg-[#ddd]" />
      <i className="absolute bottom-0 right-0 h-[2px] w-[540px] bg-[#ddd]" />
      <i className="absolute bottom-0 left-[758px] h-[8px] w-[59px] rounded-[4px] bg-[#e63030]" />
    </nav>
  );
}

function BottomBar() {
  return (
    <footer className="mt-[8px] flex border-t-[3px] border-[#f2f2f2] leading-none">
      <div className="flex w-[383px] flex-col items-center">
        <svg className="mt-[10px] h-[15px] w-[25px]" viewBox="0 0 26 16"><path d="M1 13L10 2Q13 -1 16 2L25 13Q26 16 23 16H3Q0 16 1 13Z" fill="#999" /></svg>
        <span className="mt-[23px] pl-[2px] text-[52px] tracking-[0.800px] text-[#009a00]">3348.37</span>
        <div className="mt-[18px] flex items-center text-[43.500px] text-[#666]">
          上证<span className="ml-[11px] text-[47px] tracking-[0.800px] text-[#009a00]">-0.94%</span>
        </div>
      </div>
      <div className="flex w-[264px] flex-col items-center">
        <svg className="mt-[20px] h-[70px] w-[64px]" viewBox="0 0 64 70">
          <defs>
            <linearGradient id="deal" x1="0.1" y1="0" x2="0.8" y2="0.9">
              <stop offset="0" stopColor="#f7a9a9" />
              <stop offset="1" stopColor="#e62626" />
            </linearGradient>
          </defs>
          <path d="M29 1Q32 -0.500 35 1L60 15Q64 17 64 21V49Q64 53 60 55L35 69Q32 70.500 29 69L4 55Q0 53 0 49V21Q0 17 4 15Z" fill="url(#deal)" />
          <path d="M17 30.500H45L36 22.500M47 39.500H19L28 47.500" fill="none" stroke="#fff" strokeWidth="5" strokeLinecap="round" strokeLinejoin="round" />
        </svg>
        <span className="mt-[21px] text-[43px] text-[#e63232]">交易</span>
      </div>
      <div className="flex w-[264px] flex-col items-center pl-[2px]">
        <svg className="mt-[20px] h-[70px] w-[62px]" viewBox="0 0 62 70" fill="none" stroke="#333" strokeWidth="5" strokeLinejoin="round">
          <path d="M31 4Q35 4 36 8Q54 13 54 32V43L58 50Q60 56 54 56H8Q2 56 4 50L8 43V32Q8 13 26 8Q27 4 31 4Z" />
          <path d="M24 61.500H38Q36 69 31 69Q26 69 24 61.500Z" fill="#333" stroke="none" />
        </svg>
        <span className="mt-[21px] text-[43px] text-[#666]">预警</span>
      </div>
      <div className="flex w-[264px] flex-col items-center pl-[2px]">
        <svg className="mt-[20px] size-[70px]" viewBox="0 0 70 70" fill="none" stroke="#333" strokeWidth="5">
          <circle cx="35" cy="36" r="31.500" />
          <path d="M20 36H50" strokeWidth="5.500" strokeLinecap="round" />
        </svg>
        <span className="mt-[21px] text-[43px] text-[#666]">删自选</span>
      </div>
      <div className="flex w-[264px] flex-col items-center pl-[2px]">
        <svg className="mt-[20px] size-[70px]" viewBox="0 0 70 70" fill="none" stroke="#333" strokeWidth="5">
          <rect x="6" y="6" width="25" height="25" rx="4" />
          <rect x="39" y="6" width="25" height="25" rx="4" />
          <rect x="6" y="40" width="25" height="25" rx="4" />
          <rect x="39" y="40" width="25" height="25" rx="4" />
        </svg>
        <span className="mt-[21px] text-[43px] text-[#666]">更多</span>
      </div>
    </footer>
  );
}

export default function App() {
  return (
    <main className={`h-[3200px] w-[1440px] overflow-hidden bg-white ${CJK}`}>
      <Header />
      <Quote />
      <Notice />
      <PeriodTabs />
      <Charts />
      <TemplateBar />
      <div className="h-[20px] bg-[#f4f4f4]" />
      <SectionTabs />
      <BottomBar />
    </main>
  );
}
